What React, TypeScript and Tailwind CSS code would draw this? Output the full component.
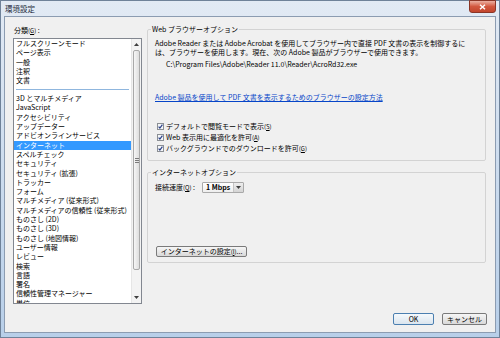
const jp = "font-['Noto_Sans_CJK_JP','Noto_Sans',sans-serif]";

const topItems = ["フルスクリーンモード", "ページ表示", "一般", "注釈", "文書"];
const mainItems = [
  "3D とマルチメディア",
  "JavaScript",
  "アクセシビリティ",
  "アップデーター",
  "アドビオンラインサービス",
  "インターネット",
  "スペルチェック",
  "セキュリティ",
  "セキュリティ (拡張)",
  "トラッカー",
  "フォーム",
  "マルチメディア (従来形式)",
  "マルチメディアの信頼性 (従来形式)",
  "ものさし (2D)",
  "ものさし (3D)",
  "ものさし (地図情報)",
  "ユーザー情報",
  "レビュー",
  "検索",
  "言語",
  "署名",
  "信頼性管理マネージャー",
  "単位",
];

const selected = "インターネット";

function Key({ k }: { k: string }) {
  return (
    <span className="text-[6px]">
      (<span className="underline">{k}</span>)
    </span>
  );
}

function ListItem({ label }: { label: string }) {
  const active = label === selected;
  return (
    <div
      className={
        active
          ? "h-[9.3px] leading-[9.3px] pl-[2px] whitespace-nowrap bg-[#3399ff] text-white"
          : "h-[9.3px] leading-[9.3px] pl-[2px] whitespace-nowrap"
      }
    >
      {label}
    </div>
  );
}

function Arrow({ up }: { up?: boolean }) {
  return (
    <svg width="5" height="3" viewBox="0 0 5 3">
      <polygon points={up ? "2.5,0 5,3 0,3" : "0,0 5,0 2.5,3"} fill="#3f3f3f" />
    </svg>
  );
}

function Scrollbar() {
  return (
    <div className="w-[10px] flex flex-col bg-[#f3f3f3] border-l border-[#e6e6e6]">
      <div className="h-[11px] flex items-center justify-center">
        <Arrow up />
      </div>
      <div className="h-[220px] mx-[1px] rounded-[2px] border border-[#a9a9a9] bg-gradient-to-r from-[#f6f6f6] to-[#dedede] flex flex-col items-center justify-center gap-[1px]">
        <div className="w-[4px] h-[1px] bg-[#7a7a7a]" />
        <div className="w-[4px] h-[1px] bg-[#7a7a7a]" />
        <div className="w-[4px] h-[1px] bg-[#7a7a7a]" />
      </div>
      <div className="flex-1" />
      <div className="h-[12px] flex items-center justify-center">
        <Arrow />
      </div>
    </div>
  );
}

function Checkbox({ children }: { children: React.ReactNode }) {
  return (
    <div className="h-[11px] flex items-center pl-[2px] gap-[2px]">
      <svg width="7" height="7" viewBox="0 0 7 7">
        <rect x="0.5" y="0.5" width="6" height="6" fill="#f4f6f8" stroke="#8b8f94" />
        <path d="M1.6 3.6 L2.9 5 L5.4 1.6" fill="none" stroke="#2a3f86" strokeWidth="1.2" />
      </svg>
      <span className="leading-[11px] whitespace-nowrap">{children}</span>
    </div>
  );
}

function Button({ children, w, def }: { children: React.ReactNode; w: string; def?: boolean }) {
  return (
    <div
      className={`${w} h-[12px] rounded-[2px] border flex items-center justify-center leading-[10px] whitespace-nowrap ${
        def
          ? "border-[#4b7fb0] bg-gradient-to-b from-[#f5f9fc] to-[#dbe5ee]"
          : "border-[#7a7a7a] bg-gradient-to-b from-[#f6f6f6] to-[#d9d9d9]"
      }`}
    >
      {children}
    </div>
  );
}

export default function App() {
  return (
    <div
      className={`w-[500px] h-[338px] flex flex-col border border-[#6f8299] bg-gradient-to-b from-[#e2eaf4] to-[#b8cfe9] text-[7px] text-black ${jp}`}
    >
      <div className="h-[15px] flex items-start justify-between pl-[4px] pr-[3px]">
        <span className="leading-[15px] text-[7.5px] text-[#1f2b3b]">環境設定</span>
        <div className="w-[27px] h-[13px] -mt-[1px] rounded-b-[3px] border border-[#8a3526] bg-gradient-to-b from-[#eab0a2] via-[#d2583f] to-[#c2452c] flex items-center justify-center">
          <svg width="7" height="6" viewBox="0 0 7 6">
            <path d="M1 0.8 L6 5.2 M6 0.8 L1 5.2" stroke="white" strokeWidth="1.5" />
          </svg>
        </div>
      </div>

      <div className="mx-[3px] mb-[4px] flex-1 border border-[#8c9cb1] bg-[#f0f0f0] flex flex-col">
        <div className="flex pl-[8px] pt-[7px] gap-[5px]">
          <div className="w-[129px] flex flex-col">
            <div className="h-[12px] leading-[12px] pl-[1px]">
              分類<Key k="G" /> :
            </div>
            <div className="mt-[2px] h-[266px] border border-[#828790] bg-white flex">
              <div className="flex-1 overflow-hidden">
                {topItems.map((item) => (
                  <ListItem key={item} label={item} />
                ))}
                <div className="h-[8.7px] flex items-center pl-[2px] pr-[2px]">
                  <div className="h-[1px] w-full bg-[#8fb6de]" />
                </div>
                {mainItems.map((item) => (
                  <ListItem key={item} label={item} />
                ))}
              </div>
              <Scrollbar />
            </div>
          </div>

          <div className="w-[339px] flex flex-col">
            <fieldset className="h-[137px] border border-[#d3d3d3] rounded-[2px] px-[3px]">
              <legend className="px-[1px] leading-[10px]">Web ブラウザーオプション</legend>
              <div className="pl-[4px] pt-[5px] leading-[8.5px]">
                <p className="whitespace-nowrap">
                  Adobe Reader または Adobe Acrobat を使用してブラウザー内で直接 PDF 文書の表示を制御するに
                  <br />
                  は、ブラウザーを使用します。現在、次の Adobe 製品がブラウザーで使用できます。
                </p>
                <p className="mt-[3.5px] pl-[11px] whitespace-nowrap">
                  C:\Program Files\Adobe\Reader 11.0\Reader\AcroRd32.exe
                </p>
                <p className="mt-[24.5px] text-[#0645c8] underline whitespace-nowrap">
                  Adobe 製品を使用して PDF 文書を表示するためのブラウザーの設定方法
                </p>
                <div className="mt-[20px] flex flex-col">
                  <Checkbox>
                    デフォルトで閲覧モードで表示<Key k="S" />
                  </Checkbox>
                  <Checkbox>
                    Web 表示用に最適化を許可<Key k="A" />
                  </Checkbox>
                  <Checkbox>
                    バックグラウンドでのダウンロードを許可<Key k="G" />
                  </Checkbox>
                </div>
              </div>
            </fieldset>

            <fieldset className="mt-[6px] h-[96px] border border-[#d3d3d3] rounded-[2px] px-[3px]">
              <legend className="px-[1px] leading-[10px]">インターネットオプション</legend>
              <div className="pl-[4px] pt-[5px]">
                <div className="h-[11px] flex items-center">
                  <span className="w-[47px] whitespace-nowrap">
                    接続速度<Key k="Q" /> :
                  </span>
                  <div className="w-[42px] h-[11px] border border-[#a9a9a9] rounded-[1px] bg-gradient-to-b from-[#ffffff] to-[#eeeeee] flex">
                    <span className="flex-1 pl-[3px] leading-[9px] font-semibold">1 Mbps</span>
                    <div className="w-[10px] border-l border-[#c4c4c4] bg-gradient-to-b from-[#eeeeee] to-[#d4d4d4] flex items-center justify-center">
                      <Arrow />
                    </div>
                  </div>
                </div>
                <div className="mt-[53px] ml-[1px] w-[91px] h-[11px] rounded-[2px] border border-[#7a7a7a] bg-gradient-to-b from-[#f6f6f6] to-[#d9d9d9] flex items-center justify-center leading-[9px] whitespace-nowrap">
                  インターネットの設定<Key k="I" />...
                </div>
              </div>
            </fieldset>
          </div>
        </div>

        <div className="mt-[9px] flex justify-end gap-[8px] pr-[8px]">
          <Button w="w-[41px]" def>
            OK
          </Button>
          <Button w="w-[45px]">キャンセル</Button>
        </div>
      </div>
    </div>
  );
}
